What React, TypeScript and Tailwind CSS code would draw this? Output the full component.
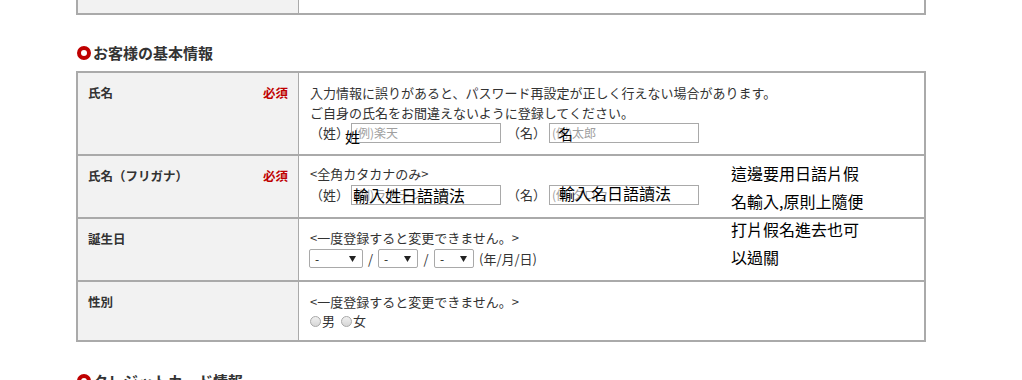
import React from "react";

function SectionTitle({ title, className = "" }: { title: string; className?: string }) {
  return (
    <div className={`ml-[77px] flex items-center h-[20px] ${className}`}>
      <span className="w-[14px] h-[14px] rounded-full border-[4px] border-[#bf0000] bg-white box-border" />
      <span className="ml-[2px] text-[15px] leading-[20px] font-bold text-[#333]">{title}</span>
    </div>
  );
}

function Label({ text, required }: { text: string; required?: boolean }) {
  return (
    <div className="w-[221px] shrink-0 bg-[#f2f2f2] border-r border-[#aaa] flex justify-between pl-[10px] pr-[10px] pt-[10px] text-[12.5px] leading-[20px] font-bold text-[#333]">
      <span>{text}</span>
      {required && <span className="text-[#bf0000]">必須</span>}
    </div>
  );
}

function TextBox({ placeholder, width = 150 }: { placeholder: string; width?: number }) {
  return (
    <div
      className="h-[20px] border border-[#a9a9a9] bg-white flex items-center pl-[2px] text-[12px] text-[#a0a0a0] leading-[18px]"
      style={{ width }}
    >
      {placeholder}
    </div>
  );
}

function Select({ width }: { width: number }) {
  return (
    <div
      className="h-[19px] border border-[#a9a9a9] rounded-[2px] bg-white flex items-center justify-between pl-[5px] pr-[6px] text-[12px] text-[#222]"
      style={{ width }}
    >
      <span>-</span>
      <svg width="7" height="6" viewBox="0 0 7 6">
        <path d="M0 0 L7 0 L3.5 6 Z" fill="#222" />
      </svg>
    </div>
  );
}

function Radio({ label }: { label: string }) {
  return (
    <span className="flex items-center">
      <span className="w-[11px] h-[11px] rounded-full border border-[#a8a8a8] bg-[linear-gradient(#f0f0f0,#d6d6d6)]" />
      <span className="ml-[1px]">{label}</span>
    </span>
  );
}

export default function App() {
  return (
    <div className="w-[1022px] h-[380px] overflow-hidden bg-white relative font-['Noto_Sans_CJK_JP',sans-serif] text-[#333]">
      {/* remnant of previous table */}
      <div className="ml-[76px] w-[850px] h-[15px] border-x-2 border-b-2 border-[#aaa] flex">
        <div className="w-[221px] bg-[#f2f2f2] border-r border-[#aaa]" />
        <div className="flex-1" />
      </div>

      <SectionTitle className="mt-[28px]" title="お客様の基本情報" />

      <div className="mt-[8px] ml-[76px] w-[850px] border-2 border-[#aaa]">
        {/* 氏名 */}
        <div className="flex h-[81px]">
          <Label text="氏名" required />
          <div className="flex-1 pl-[11px] pt-[10px] text-[13px] leading-[20px]">
            <div>入力情報に誤りがあると、パスワード再設定が正しく行えない場合があります。</div>
            <div>ご自身の氏名をお間違えないように登録してください。</div>
            <div className="relative flex items-center h-[20px]">
              <span className="w-[39px]">（姓）</span>
              <div className="ml-[2px]">
                <TextBox placeholder="(例)楽天" />
              </div>
              <span className="ml-[6px] w-[39px]">（名）</span>
              <div className="ml-[3px]">
                <TextBox placeholder="(例)太郎" />
              </div>
              <span className="absolute left-[35px] top-[5px] text-[15px] leading-[18px] text-black font-['Noto_Sans_CJK_TC',sans-serif]">姓</span>
              <span className="absolute left-[248px] top-[2px] text-[15px] leading-[18px] text-black font-['Noto_Sans_CJK_TC',sans-serif]">名</span>
            </div>
          </div>
        </div>

        {/* 氏名（フリガナ） */}
        <div className="flex h-[63px] border-t-2 border-[#aaa]">
          <Label text="氏名（フリガナ）" required />
          <div className="flex-1 pl-[11px] pt-[8px] text-[13px] leading-[20px]">
            <div>&lt;全角カタカナのみ&gt;</div>
            <div className="relative flex items-center h-[20px] mt-[1px]">
              <span className="w-[39px]">（姓）</span>
              <div className="ml-[2px]">
                <TextBox placeholder="(例)ラクテン" />
              </div>
              <span className="ml-[6px] w-[39px]">（名）</span>
              <div className="ml-[3px]">
                <TextBox placeholder="(例)タロウ" />
              </div>
              <span className="absolute left-[43px] top-0 text-[16px] leading-[20px] text-black font-['Noto_Sans_CJK_TC',sans-serif]">輸入姓日語讀法</span>
              <span className="absolute left-[249px] top-[-2px] text-[16px] leading-[20px] text-black font-['Noto_Sans_CJK_TC',sans-serif]">輸入名日語讀法</span>
            </div>
          </div>
        </div>

        {/* 誕生日 */}
        <div className="flex h-[63px] border-t-2 border-[#aaa]">
          <Label text="誕生日" />
          <div className="flex-1 pl-[10px] pt-[9px] text-[13px] leading-[20px]">
            <div className="pl-[1px]">&lt;一度登録すると変更できません。&gt;</div>
            <div className="flex items-center h-[19px] mt-[1px]">
              <Select width={54} />
              <span className="w-[15px] text-center">/</span>
              <Select width={40} />
              <span className="w-[16px] text-center">/</span>
              <Select width={40} />
              <span className="ml-[5px]">(年/月/日)</span>
            </div>
          </div>
        </div>

        {/* 性別 */}
        <div className="flex h-[60px] border-t-2 border-[#aaa]">
          <Label text="性別" />
          <div className="flex-1 pl-[11px] pt-[10px] text-[13px] leading-[20px]">
            <div>&lt;一度登録すると変更できません。&gt;</div>
            <div className="flex items-center h-[18px] gap-[6px]">
              <Radio label="男" />
              <Radio label="女" />
            </div>
          </div>
        </div>
      </div>

      <SectionTitle className="mt-[29px]" title="クレジットカード情報" />

      {/* handwritten-style annotation overlay */}
      <div className="absolute left-[731px] top-[159px] text-[16px] leading-[28px] text-black font-['Noto_Sans_CJK_TC',sans-serif]">
        <div>這邊要用日語片假</div>
        <div>名輸入,原則上隨便</div>
        <div>打片假名進去也可</div>
        <div>以過關</div>
      </div>
    </div>
  );
}
